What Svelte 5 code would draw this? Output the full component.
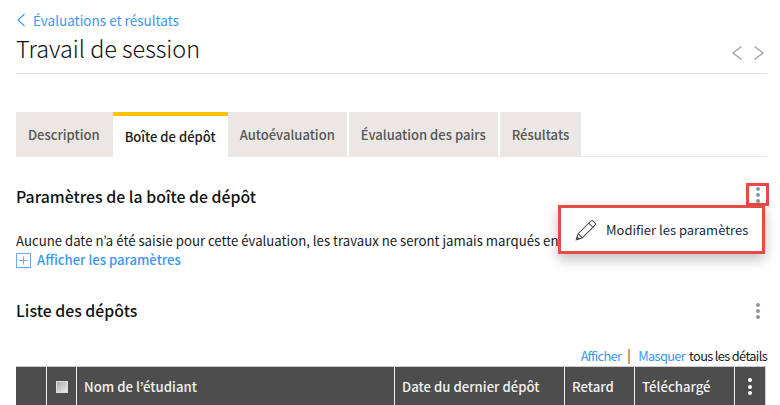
<script>
  const tabs = ['Description', 'Boîte de dépôt', 'Autoévaluation', 'Évaluation des pairs', 'Résultats'];
  let active = 1;
</script>

<div class="page">
  <a class="back" href="#top">
    <svg width="10" height="14" viewBox="0 0 10 14"><path d="M8.5 1 2 7l6.500 6" /></svg>
    Évaluations et résultats
  </a>
  <div class="title-row">
    <h1>Travail de session</h1>
    <div class="pager">
      <svg width="12" height="16" viewBox="0 0 12 16"><path d="M10.500 1.500 2 8l8.500 6.500" /></svg>
      <svg width="12" height="16" viewBox="0 0 12 16"><path d="M1.500 1.500 10 8l-8.500 6.500" /></svg>
    </div>
  </div>

  <ul class="tabs">
    {#each tabs as tab, i}
      <li class:active={i === active}>{tab}</li>
    {/each}
  </ul>

  <section class="settings">
    <div class="section-head">
      <h2>Paramètres de la boîte de dépôt</h2>
      <button class="kebab flagged" aria-label="Options"><i></i><i></i><i></i></button>
      <div class="menu">
        <svg width="22" height="22" viewBox="0 0 24 24">
          <path d="M1.500 22.500 3.500 16 17.300 2.200a1.800 1.800 0 0 1 2.500 0l2 2a1.800 1.800 0 0 1 0 2.500L8 20.500Z" />
          <path d="M15 4.500l4.500 4.500M3.500 16 8 20.500M1.500 22.500l2.800-.9-1.900-1.900Z" />
        </svg>
        <span>Modifier les paramètres</span>
      </div>
    </div>
    <p>Aucune date n’a été saisie pour cette évaluation, les travaux ne seront jamais marqués en retard.</p>
    <a class="toggle" href="#top">
      <svg width="15" height="15" viewBox="0 0 15 15"><rect x="0.500" y="0.500" width="14" height="14" /><path d="M7.500 3.500v8M3.500 7.500h8" /></svg>
      Afficher les paramètres
    </a>
  </section>

  <section class="list">
    <div class="section-head">
      <h2>Liste des dépôts</h2>
      <button class="kebab" aria-label="Options"><i></i><i></i><i></i></button>
    </div>
    <div class="details">
      <a href="#top">Afficher</a><span class="sep"></span><a href="#top">Masquer</a><span class="rest">tous les détails</span>
    </div>
    <div class="table">
      <div class="cell"></div>
      <div class="cell c-b"><span class="check"></span></div>
      <div class="cell">Nom de l’étudiant</div>
      <div class="cell">Date du dernier dépôt</div>
      <div class="cell">Retard</div>
      <div class="cell">Téléchargé</div>
      <div class="cell c-more"><span class="kebab white"><i></i><i></i><i></i></span></div>
    </div>
  </section>
</div>

<style>
  :global(body) {
    margin: 0;
    background: #fff;
    overflow: hidden;
  }

  .page {
    width: 751px;
    height: 405px;
    margin-left: 16px;
    font-family: "Noto Sans CJK JP", "Noto Sans", sans-serif;
    font-size: 13.500px;
    color: #1a1a1a;
  }

  a {
    color: #3a97f8;
    text-decoration: none;
  }

  svg path,
  svg rect {
    fill: none;
  }

  .back {
    display: flex;
    align-items: center;
    gap: 7px;
    height: 20px;
    padding-top: 10px;
    line-height: 20px;
  }

  .back svg path {
    stroke: #3a97f8;
    stroke-width: 1.100;
  }

  .title-row {
    display: flex;
    justify-content: space-between;
    align-items: center;
    height: 43px;
    border-bottom: 1px solid #dcdcdc;
  }

  h1 {
    margin: 0 0 7px;
    font-size: 23.400px;
    font-weight: 300;
    line-height: 36px;
    color: #111;
  }

  .pager {
    display: flex;
    gap: 10px;
    padding-right: 2px;
    padding-top: 3px;
  }

  .pager svg path {
    stroke: #9c9c9c;
    stroke-width: 1.200;
  }

  .tabs {
    display: flex;
    height: 44px;
    margin: 38px 0 0;
    padding: 0;
    list-style: none;
    border-bottom: 1px solid #e8e8e8;
  }

  .tabs li {
    display: flex;
    align-items: center;
    padding: 0 12px;
    margin-right: 2px;
    background: #ebe7e4;
    color: #555;
    font-size: 13.050px;
    font-weight: 500;
  }

  .tabs li:first-child {
    padding-right: 13px;
  }

  .tabs li:first-child,
  .tabs li.active {
    margin-right: 0;
  }

  .tabs li.active {
    background: #fff;
    border-top: 4px solid #fdc300;
    color: #1a1a1a;
    margin-bottom: -1px;
  }

  .section-head {
    position: relative;
    display: flex;
    justify-content: space-between;
    align-items: center;
  }

  .settings .section-head {
    margin-top: 28px;
    height: 24px;
  }

  h2 {
    margin: 0;
    font-size: 15.850px;
    font-weight: 500;
    line-height: 24px;
    color: #111;
  }

  .kebab {
    display: flex;
    flex-direction: column;
    align-items: center;
    justify-content: center;
    gap: 2px;
    width: 20px;
    margin-right: -1px;
    padding: 0;
    border: 0;
    background: none;
  }

  .kebab i {
    width: 4px;
    height: 4px;
    border-radius: 50%;
    background: #8d95a0;
  }

  .kebab.flagged {
    box-sizing: border-box;
    align-self: flex-start;
    width: 23px;
    height: 23px;
    margin-right: -2px;
    margin-top: -2px;
    border: 3px solid #e84a45;
  }

  .kebab.white {
    gap: 2.500px;
    margin-right: 0;
  }

  .kebab.white i {
    background: #fff;
  }

  .menu {
    position: absolute;
    top: 20px;
    right: 2px;
    display: flex;
    align-items: center;
    gap: 9px;
    box-sizing: border-box;
    width: 207px;
    height: 49px;
    padding-left: 14px;
    background: #fff;
    border: 3px solid #e84a45;
    box-shadow: 0 5px 12px rgba(0, 0, 0, 0.25);
    color: #1a2a3a;
    font-size: 13px;
    white-space: nowrap;
    z-index: 2;
  }

  .menu svg path {
    stroke: #444;
    stroke-width: 1.100;
  }

  p {
    margin: 22px 0 0;
    font-size: 13.200px;
    line-height: 19px;
    white-space: nowrap;
  }

  .toggle {
    display: flex;
    align-items: center;
    gap: 6px;
    height: 18px;
    padding-top: 1px;
    margin-bottom: -1px;
    font-size: 13.100px;
    font-weight: 500;
    line-height: 18px;
  }

  .toggle svg rect,
  .toggle svg path {
    stroke: #6aa9f5;
  }

  .list .section-head {
    margin-top: 31px;
    height: 24px;
  }

  .details {
    display: flex;
    justify-content: flex-end;
    align-items: center;
    margin-top: 24px;
    height: 18px;
    font-size: 12.800px;
    letter-spacing: -0.650px;
    line-height: 18px;
  }

  .sep {
    width: 2px;
    height: 15px;
    margin: 0 8px 0 7px;
    background: #d6a05c;
  }

  .rest {
    margin-left: 4px;
  }

  .table {
    display: grid;
    grid-template-columns: 31px 30px 318px 170px 70px 100px 31px;
    box-sizing: border-box;
    width: 750px;
    height: 40px;
    margin-top: 1px;
    background: #4d4d4d;
    border-top: 1px solid #ccc;
    border-right: 1px solid #ccc;
    color: #f2f2f2;
    font-size: 13.200px;
    font-weight: 500;
  }

  .cell {
    display: flex;
    align-items: center;
    box-sizing: border-box;
    padding-left: 7px;
    border-right: 1px solid #f0f0f0;
  }

  .c-more {
    border-right: 0;
    padding-left: 5px;
  }

  .c-b {
    justify-content: center;
    padding-left: 1px;
  }

  .check {
    box-sizing: border-box;
    width: 12px;
    height: 12px;
    background: linear-gradient(135deg, #aaa, #eee);
    border: 1px solid #ddd;
  }
</style>
